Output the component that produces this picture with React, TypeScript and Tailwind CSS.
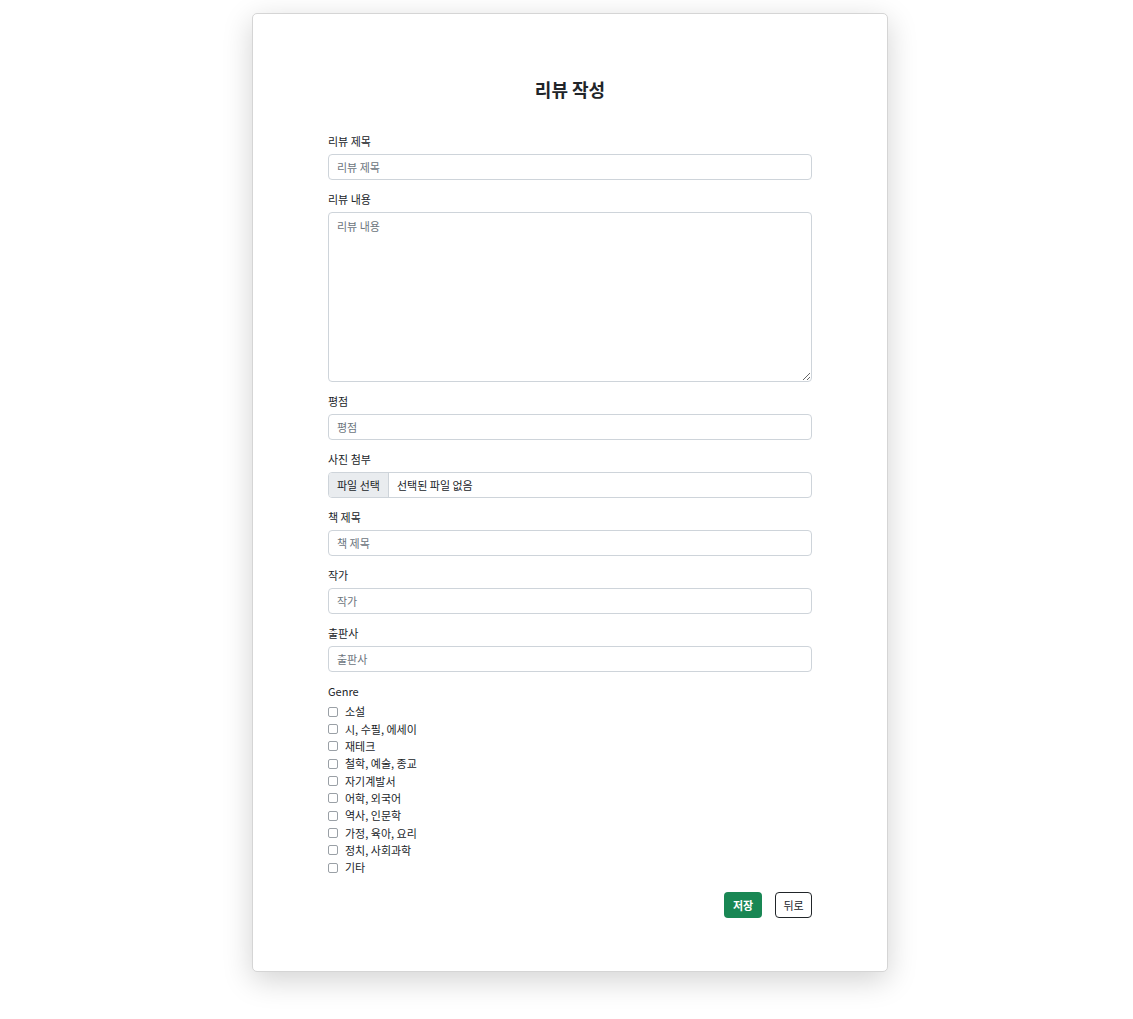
import React from "react";

const genres = [
  "소설",
  "시, 수필, 에세이",
  "재테크",
  "철학, 예술, 종교",
  "자기계발서",
  "어학, 외국어",
  "역사, 인문학",
  "가정, 육아, 요리",
  "정치, 사회과학",
  "기타",
];

function Field({ label, placeholder }: { label: string; placeholder: string }) {
  return (
    <div className="flex flex-col">
      <label className="text-[11px] leading-[18px] text-[#212529] mb-1">{label}</label>
      <input
        className="h-[26px] w-full rounded-[4px] border border-[#ced4da] px-[8px] text-[11px] text-[#212529] placeholder:text-[#6c757d] outline-none"
        placeholder={placeholder}
      />
    </div>
  );
}

export default function App() {
  return (
    <div
      className="min-h-[1019px] w-full bg-white pt-[13px]"
      style={{ fontFamily: '"Noto Sans CJK KR", "Noto Sans", sans-serif' }}
    >
      <div className="ml-[252px] w-[636px] rounded-[5px] border border-[#d5d5d5] bg-white px-[75px] pb-[53px] pt-[60px] shadow-[0_8px_30px_rgba(0,0,0,0.18)]">
        <h3 className="mb-[28px] text-center text-[18px] font-bold leading-[30px] text-[#212529]">리뷰 작성</h3>
        <div className="flex flex-col gap-[10px]">
          <Field label="리뷰 제목" placeholder="리뷰 제목" />
          <div className="flex flex-col">
            <label className="text-[11px] leading-[18px] text-[#212529] mb-1">리뷰 내용</label>
            <textarea
              className="h-[170px] w-full rounded-[4px] border border-[#ced4da] px-[8px] py-[5px] text-[11px] text-[#212529] placeholder:text-[#6c757d] outline-none"
              placeholder="리뷰 내용"
            />
          </div>
          <Field label="평점" placeholder="평점" />
          <div className="flex flex-col">
            <label className="text-[11px] leading-[18px] text-[#212529] mb-1">사진 첨부</label>
            <div className="flex h-[26px] w-full overflow-hidden rounded-[4px] border border-[#ced4da] text-[11px] text-[#212529]">
              <span className="flex items-center border-r border-[#ced4da] bg-[#e9ecef] px-[8px]">파일 선택</span>
              <span className="flex items-center px-[8px]">선택된 파일 없음</span>
            </div>
          </div>
          <Field label="책 제목" placeholder="책 제목" />
          <Field label="작가" placeholder="작가" />
          <Field label="출판사" placeholder="출판사" />
          <div className="flex flex-col">
            <label className="text-[11px] leading-[18px] text-[#212529] mb-[3px]">Genre</label>
            {genres.map((g) => (
              <label key={g} className="flex h-[17.33px] items-center text-[11px] text-[#212529]">
                <span className="mr-[7px] inline-block h-[10px] w-[10px] rounded-[2px] border border-[#9aa0a6] bg-white" />
                {g}
              </label>
            ))}
          </div>
        </div>
        <div className="mt-[16px] flex justify-end gap-[13px]">
          <button className="h-[26px] w-[38px] rounded-[4px] bg-[#198754] text-[11px] font-bold text-white">저장</button>
          <button className="h-[26px] w-[37px] rounded-[4px] border border-[#212529] bg-white text-[11px] text-[#212529]">뒤로</button>
        </div>
      </div>
    </div>
  );
}
